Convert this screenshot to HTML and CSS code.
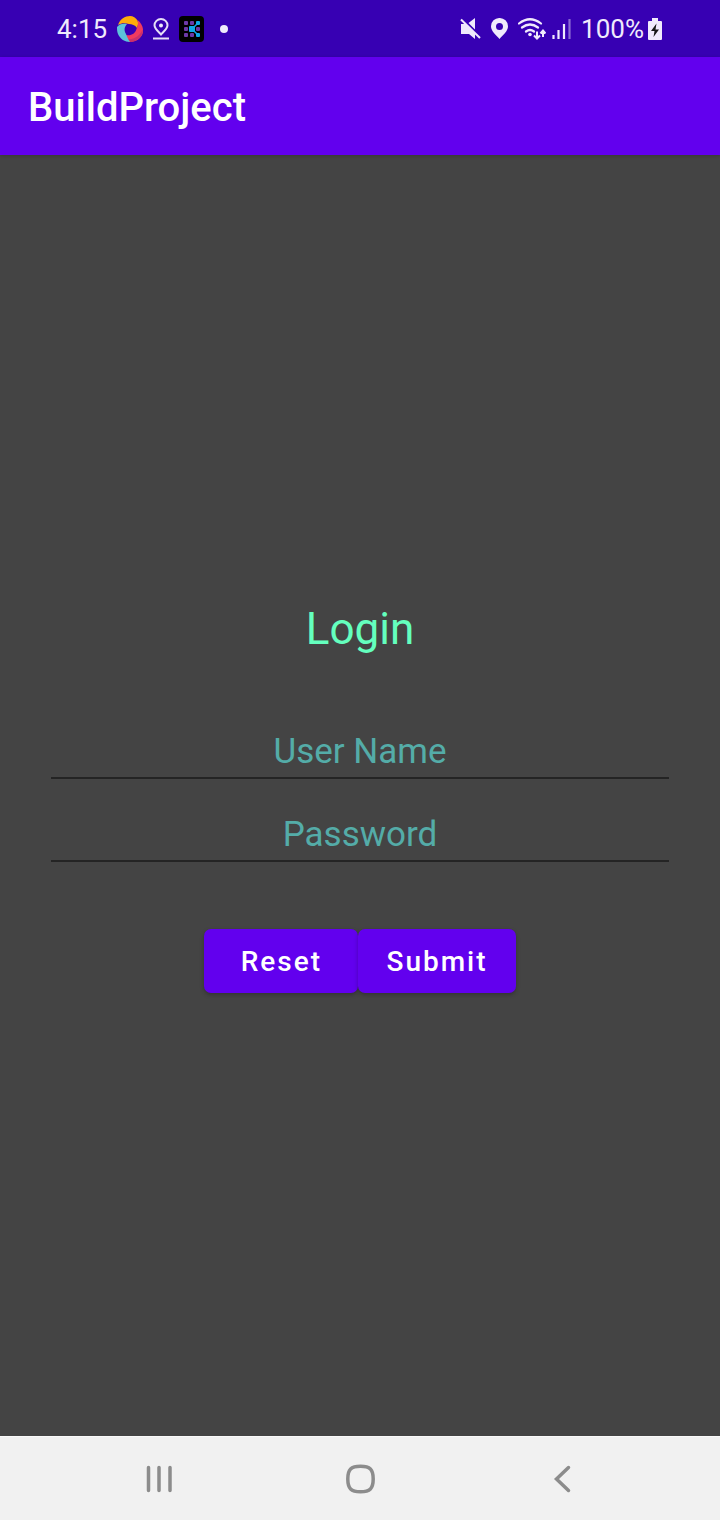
FILE: index.html
```html
<!DOCTYPE html>
<html lang="en">
<head>
<meta charset="utf-8">
<meta name="viewport" content="width=device-width, initial-scale=1">
<title>BuildProject</title>
<link rel="stylesheet" href="styles.css">
</head>
<body>
<div class="status">
  <div class="status-left">
    <span class="time">4:15</span>
    <svg width="26" height="26" viewBox="0 0 26 26" aria-hidden="true">
      <path fill="#ffab0a" d="M1 9C3 3 8 0 13 0c3 0 6 2 7.500 4.500 1 2.500.5 5-.5 7.500-2-3-5-4-8-4-4-1-8-1-11 1z"/>
      <path fill="#f03a5f" d="M20.500 4c5 4 6.500 9 5 14-2 5-7 8-13 8-2-1-3.500-3-3.500-7 5 1 9-1 10.500-6 1.500-3 2-6 1-9z"/>
      <path fill="#c9306b" d="M26 13c0 8-6 13-13.500 13-1.500-1-2.500-2-3-3 8 1 13-3 16.500-10z"/>
      <path fill="#5cc3da" d="M0 11c2-3 6-4 10-3-3 3-3 7-1 10 1 3 2 5 4 8C8 26 3 23 1 18c-1-2-1-5-1-7z"/>
    </svg>
    <svg width="16" height="22" viewBox="0 0 16 22" aria-hidden="true">
      <path fill="none" stroke="#e6dff7" stroke-width="2" d="M8 16.500C4 12.500 1.500 10.500 1.500 7.300a6.500 6.300 0 0 1 13 0c0 3.200-2.500 5.200-6.500 9.200z"/>
      <circle cx="8" cy="7.500" r="2" fill="#f0eafc"/>
      <path stroke="#e6dff7" stroke-width="2" d="M0 20.500h16"/>
    </svg>
    <svg width="25" height="26" viewBox="0 0 25 26" aria-hidden="true">
      <rect width="25" height="26" rx="4" fill="#000"/>
      <g fill="#6c3aa8"><rect x="5" y="5" width="4" height="4" rx="1"/><rect x="11" y="5" width="4" height="4" rx="1"/><rect x="5" y="11" width="4" height="4" rx="1"/><rect x="17" y="11" width="4" height="4" rx="1"/><rect x="5" y="17" width="4" height="4" rx="1"/><rect x="11" y="17" width="4" height="4" rx="1"/></g>
      <path d="M13 13l6-6M13 13l6 6" stroke="#0fa8e8" stroke-width="1.500"/>
      <g fill="#0fa8e8"><rect x="10" y="10" width="6" height="6" rx="1"/><rect x="17" y="5" width="4" height="4" rx="1"/><rect x="17" y="17" width="4" height="4" rx="1"/></g>
    </svg>
    <span class="dot"></span>
  </div>
  <div class="status-right">
    <svg width="21" height="22" viewBox="0 0 21 22" aria-hidden="true">
      <path fill="#f0eafc" d="M1 6h4.500L15 15.500V21l-6-5H1zM8.500 5L15 0v11.500z"/>
      <path stroke="#f0eafc" stroke-width="2" d="M1 1.500l19 18.500"/>
    </svg>
    <svg width="17" height="21" viewBox="0 0 17 21" aria-hidden="true">
      <path fill="#f0eafc" fill-rule="evenodd" d="M8.500 0A8.300 8.300 0 0 0 0 8.300C0 13 4.500 16.500 8.500 21c4-4.500 8.500-8 8.500-12.700A8.300 8.300 0 0 0 8.500 0zm0 5a3.500 3.500 0 1 1 0 7 3.500 3.500 0 0 1 0-7z"/>
    </svg>
    <svg width="28" height="22" viewBox="0 0 28 22" aria-hidden="true">
      <g fill="none" stroke="#f0eafc" stroke-width="2.200" stroke-linecap="round"><path d="M1 5.500Q12 -3 23 5.500M4 9.500q8-6 16 0M8 13.500q4-3 8 0"/></g>
      <circle cx="12" cy="16.500" r="1.800" fill="#f0eafc"/>
      <path fill="none" stroke="#f0eafc" stroke-width="2" d="M19 13.500v7M16 17.500l3 3 3-3M25 19v-6.500M22.500 15.500l2.500-3 2.500 3"/>
    </svg>
    <svg class="signal" width="19" height="20" viewBox="0 0 19 20" aria-hidden="true">
      <path stroke="#f0eafc" stroke-width="2.200" d="M1.500 16v4M6.500 11v9M12 5v15"/><path stroke="#f0eafc" stroke-width="2.200" opacity=".45" d="M17.500 0v20"/>
    </svg>
    <span class="charge">100%</span>
    <svg width="14" height="22" viewBox="0 0 14 22" aria-hidden="true">
      <path fill="#f0eafc" d="M4 0h6v3h3q1 0 1 1v17q0 1-1 1H1q-1 0-1-1V4q0-1 1-1h3z"/>
      <path fill="#171717" d="M8.500 5.500L3 13h3.500l-1 6L11 11.500H7.500z"/>
    </svg>
  </div>
</div>
<header class="appbar"><h1>BuildProject</h1></header>
<main class="screen">
  <form class="login">
    <h2>Login</h2>
    <input class="field" type="text" placeholder="User Name" aria-label="User Name">
    <input class="field" type="password" placeholder="Password" aria-label="Password">
    <div class="actions">
      <button class="btn" type="reset">Reset</button>
      <button class="btn" type="button">Submit</button>
    </div>
  </form>
</main>
<nav class="navbar">
  <button type="button" aria-label="Recent apps">
    <svg width="32" height="32" viewBox="0 0 32 32"><path d="M6.500 4.500v23M17 4.500v23M28 4.500v23"/></svg>
  </button>
  <button type="button" aria-label="Home">
    <svg width="32" height="32" viewBox="0 0 32 32"><path d="M16.500 3.300c9.500 0 12.700 3.200 12.700 12.700S26 28.700 16.500 28.700 3.800 25.500 3.800 16 7 3.300 16.500 3.300z"/></svg>
  </button>
  <button type="button" aria-label="Back">
    <svg width="32" height="32" viewBox="0 0 32 32"><path d="M22.500 4.500L10.500 16l12 11.500"/></svg>
  </button>
</nav>
</body>
</html>
```
FILE: styles.css
```css
* {
  box-sizing: border-box;
}

body {
  margin: 0;
  min-height: 100vh;
  display: flex;
  flex-direction: column;
  background: #444;
  font-family: Roboto, "Noto Sans", sans-serif;
}

svg {
  display: block;
  flex: none;
}

.status {
  display: flex;
  justify-content: space-between;
  align-items: center;
  height: 57px;
  padding: 0 58px 0 57px;
  background: #3700b3;
  color: #f0eafc;
  font-size: 26px;
  line-height: 32px;
}

.status-left,
.status-right {
  display: flex;
  align-items: center;
  gap: 10px;
}

.dot {
  width: 8px;
  height: 8px;
  margin-left: 6px;
  border-radius: 50%;
  background: #f0eafc;
}

.signal {
  margin-left: -4px;
}

.charge {
  margin-right: -6px;
}

.appbar {
  display: flex;
  align-items: center;
  height: 98px;
  padding: 4px 28px 0;
  background: #6200ee;
  box-shadow: 0 1px 4px rgba(0, 0, 0, 0.2);
}

.appbar h1 {
  margin: 0;
  color: #fff;
  font-size: 40px;
  font-weight: 500;
  line-height: 48px;
}

.screen {
  flex: 1;
  display: flex;
  flex-direction: column;
  justify-content: center;
  padding: 4px 51px 0;
}

.login {
  display: flex;
  flex-direction: column;
  align-items: center;
}

.login h2 {
  margin: 0 0 68px;
  color: #64ffbe;
  font-size: 44px;
  font-weight: 400;
  line-height: 52px;
}

.field {
  width: 100%;
  height: 56px;
  margin-bottom: 27px;
  padding: 4px 0 0;
  border: 0;
  border-bottom: 2px solid #242424;
  border-radius: 0;
  outline: 0;
  background: transparent;
  color: #64ffbe;
  font: 400 35px/48px Roboto, "Noto Sans", sans-serif;
  text-align: center;
}

.field::placeholder {
  color: #54aca8;
  opacity: 1;
}

.actions {
  display: flex;
  margin-top: 40px;
}

.btn {
  height: 64px;
  min-width: 154px;
  padding: 2px 28px 0;
  border: 0;
  border-radius: 7px;
  background: #6200ee;
  box-shadow: 0 2px 4px rgba(0, 0, 0, 0.25);
  color: #fff;
  font: 500 28px/32px Roboto, "Noto Sans", sans-serif;
  letter-spacing: 2px;
}

.navbar {
  display: flex;
  justify-content: center;
  gap: 170px;
  height: 84px;
  border-top: 1px solid #fafafa;
  background: #f1f1f1;
}

.navbar button {
  display: flex;
  align-items: center;
  padding: 0;
  border: 0;
  background: transparent;
}

.navbar path {
  fill: none;
  stroke: #8c8c8c;
  stroke-width: 3.500;
  stroke-linecap: round;
}
```
